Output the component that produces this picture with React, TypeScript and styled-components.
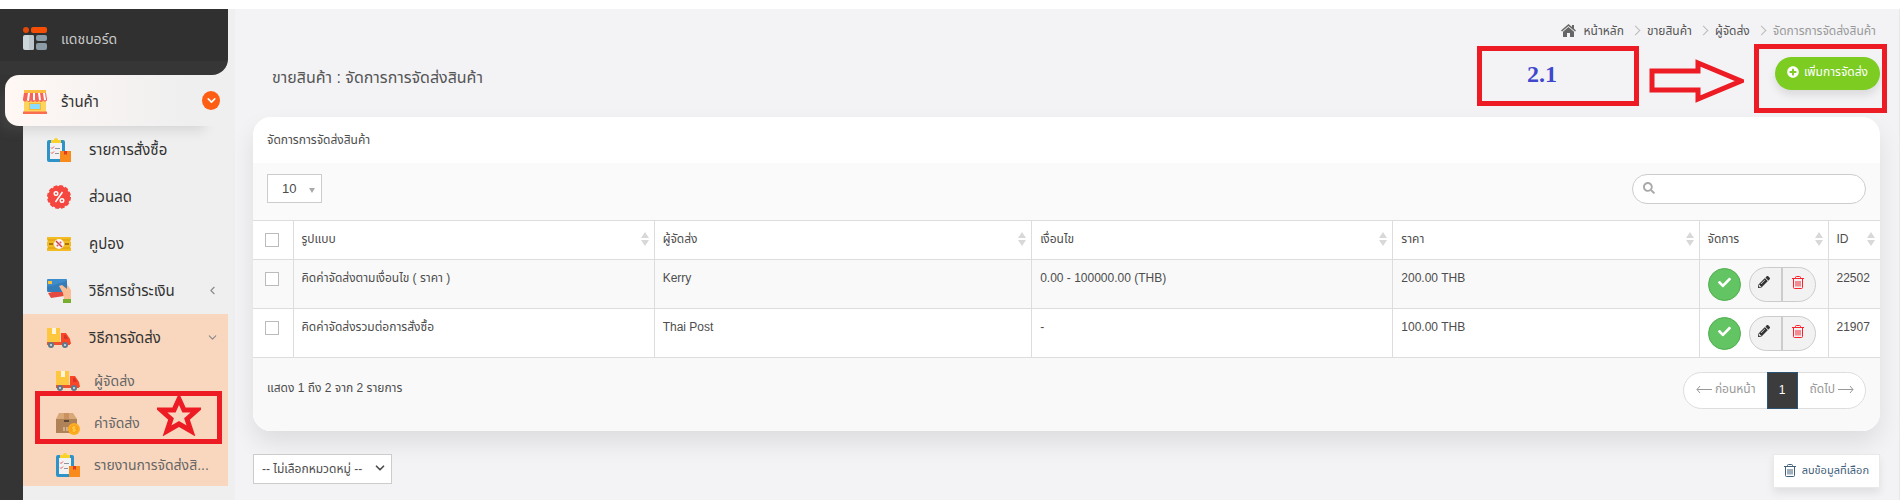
import React from "react";
import styled, { createGlobalStyle } from "styled-components";
import { FaCheck, FaPencilAlt, FaPlusCircle, FaSearch } from "react-icons/fa";
import { ChevronDown, ChevronLeft } from "lucide-react";

const Global = createGlobalStyle`
  *, *::before, *::after { box-sizing: border-box; }
  body { margin: 0; background: #fff; color: #4d4d4d; font: 12px/20px "Liberation Sans", "Noto Sans Thai", sans-serif; }
  a { color: inherit; text-decoration: none; }
  button, input, select { font: inherit; color: inherit; }
  svg { display: block; flex: none; }
  ul, ol, h1, h2 { margin: 0; padding: 0; list-style: none; font-weight: 400; }
`;

const Page = styled.div`display: flex; min-height: 100vh; padding-top: 9px;`;

/* sidebar */
const Sidebar = styled.aside`
  position: relative;
  flex: none;
  width: 235px;
  background: linear-gradient(90deg, #343434 23px, #efefef 23px);
`;
const DashboardLink = styled.a`
  display: flex; align-items: center; gap: 14px;
  height: 66px; margin-right: 7px; padding: 0 0 6px 23px;
  background: linear-gradient(#303030 52px, #363636 52px);
  border-bottom-right-radius: 16px;
  color: #c9c9c9; font-size: 14px;
`;
const ShopLink = styled.a`
  display: flex; align-items: center; gap: 14px;
  height: 51px; margin: 0 15px 0 5px; padding: 2px 0 0 18px;
  border-radius: 14px 0 0 14px;
  background: linear-gradient(90deg, #fff8f5, #efefef 85%);
  box-shadow: -10px 10px 12px -6px rgba(120, 120, 120, 0.22);
  color: #333; font-size: 15px;
`;
const ShopBadge = styled.span`
  display: grid; place-items: center; width: 18px; height: 19px; margin-left: auto; margin-top: -3px;
  border-radius: 50%; background: #fd5e13; color: #fff;
`;
const SubMenu = styled.ul`
  padding: 0 7px 0 23px;
  ul { margin-top: -1px; }
`;
const SubLink = styled.a`
  display: flex; align-items: center; gap: 18px; height: 47px; padding: 0 9px 0 24px;
  color: #333; font-size: 15px;
  > svg:last-child:not(:first-child) { margin-left: auto; color: #888; }
`;
const ActiveGroup = styled.li`background: #f9d7be; color: #222;`;
const LeafLink = styled.a`
  display: flex; align-items: center; gap: 14px; height: 42px; padding: 0 12px 0 33px;
  color: #666; font-size: 14px; white-space: nowrap;
`;

/* content */
const Main = styled.main`
  position: relative; flex: 1; min-width: 0; padding: 0 19px 0 18px;
  background: #f3f3f6; border-right: 1px solid #e9e9ec;
`;
const Crumbs = styled.ol`
  display: flex; justify-content: flex-end; align-items: center; gap: 8px; height: 43px; padding-right: 4px;
  color: #555;
  li { display: flex; align-items: center; gap: 8px; }
  li + li::before { content: ""; width: 7px; height: 7px; border: solid #bbb; border-width: 1px 1px 0 0; transform: rotate(45deg); }
  li:last-child { color: #999; }
`;
const TitleBar = styled.header`
  display: flex; justify-content: space-between; align-items: flex-start; height: 65px; padding-top: 5px;
  h1 { padding: 10px 0 0 19px; font-size: 16px; line-height: 22px; color: #555; }
`;
const AddButton = styled.button`
  display: flex; align-items: center; gap: 5px; height: 33px; padding: 0 12px 4px; border: 0; border-radius: 17px;
  background: #7ccc22; color: #fff; box-shadow: 0 5px 8px rgba(0, 0, 0, 0.1);
`;
const Card = styled.section`overflow: hidden; border-radius: 18px; background: #fff;`;
const CardShadow = styled.div`border-radius: 18px; box-shadow: 0 12px 24px rgba(0, 0, 0, 0.09);`;
const CardTitle = styled.h2`height: 46px; padding: 13px 14px; font-size: 12px; line-height: 20px;`;
const Toolbar = styled.div`
  display: flex; justify-content: space-between; height: 57px; padding: 11px 14px; background: #fafafa;
`;
const SelectWrap = styled.label<{ $small?: boolean }>`
  position: relative; display: block; height: ${(p) => (p.$small ? 29 : 30)}px;
  select {
    appearance: none; height: 100%; padding: ${(p) => (p.$small ? "0 24px 0 14px" : "0 28px 0 8px")};
    border: 1px solid #ccc; border-radius: 0; background: #fff; font-size: ${(p) => (p.$small ? 13 : 12)}px;
  }
  svg { position: absolute; right: ${(p) => (p.$small ? 7 : 5)}px; top: 7px; pointer-events: none; }
`;
const SearchBox = styled.label`
  display: flex; align-items: center; gap: 8px; width: 234px; height: 30px; padding: 0 12px 2px 10px;
  border: 1px solid #ccc; border-radius: 15px; background: #fff; color: #aaa;
  input { min-width: 0; flex: 1; border: 0; outline: 0; background: none; }
`;
const DataTable = styled.table`
  width: 100%; table-layout: fixed; border-collapse: collapse;
  th, td { border: 1px solid #ddd; text-align: left; vertical-align: top; font-weight: 400; padding: 8px; white-space: nowrap; }
  th { height: 39px; }
  td { height: 49px; }
  th:first-child, td:first-child { border-left: 0; padding: 12px 12px 0; }
  th:last-child, td:last-child { border-right: 0; }
  tbody tr:nth-child(odd) { background: #f9f9f9; }
`;
const HeadCell = styled.span`display: flex; align-items: center; justify-content: space-between; margin-right: -3px;`;
const Check = styled.input`
  appearance: none; display: block; width: 14px; height: 14px; margin: 0; border: 1px solid #bbb; background: #fff;
`;
const Actions = styled.div`display: flex; align-items: center; gap: 8px; height: 34px; margin: -1px 0 -4px;`;
const OkButton = styled.button`
  display: grid; place-items: center; width: 33px; height: 33px; padding: 0 0 4px; border: 1px solid #4fae4d; border-radius: 50%;
  background: #62c462; color: #fff;
`;
const Pair = styled.div`
  display: flex; width: 67px; height: 35px; border: 1px solid #ccc; border-radius: 18px; overflow: hidden; background: #f2f2f2;
`;
const PairButton = styled.button<{ $danger?: boolean }>`
  flex: 1; display: grid; place-items: center; padding: 0 2px 4px 0; border: 0; background: none;
  color: ${(p) => (p.$danger ? "#f8222f" : "#333")};
  & + & { border-left: 2px solid #ccc; }
`;
const CardFooter = styled.footer`
  display: flex; justify-content: space-between; height: 73px; padding: 14px 14px 0; background: #f9f9f9;
  p { margin: 6px 0 0; }
`;
const Pager = styled.nav`
  display: flex; height: 37px; border: 1px solid #ddd; border-radius: 19px; background: #fff;
`;
const PageButton = styled.button<{ $current?: boolean }>`
  display: flex; align-items: center; justify-content: center; gap: 3px; padding: 0 11px 4px 12px; border: 0; background: none; color: #999;
  ${(p) => p.$current && "width: 31px; margin: -1px 0; padding: 0 0 2px; border: 1px solid #2d5472; background: #3c3c3c; color: #fff;"}
`;
const BulkBar = styled.div`display: flex; justify-content: space-between; padding-top: 23px;`;
const DeleteButton = styled.button`
  display: flex; align-items: center; gap: 6px; height: 34px; padding: 0 10px 2px; border: 1px solid #e9e9e9;
  background: #fff; color: #41607a; font-size: 11px; box-shadow: 0 5px 8px rgba(0, 0, 0, 0.08);
`;

/* red guide marks drawn over the page */
const Mark = styled.div<{ $w: number; $h: number; $top: number; $left?: number; $right?: number }>`
  position: absolute; pointer-events: none; border: 5px solid #ed1c24;
  width: ${(p) => p.$w}px; height: ${(p) => p.$h}px; top: ${(p) => p.$top}px;
  ${(p) => (p.$left !== undefined ? `left: ${p.$left}px;` : `right: ${p.$right}px;`)}
`;
const StepNumber = styled.strong`
  display: block; padding: 9px 0 0 45px; color: #3f48cc; font: bold 24px/28px "Liberation Serif", serif;
`;
const ArrowMark = styled.svg`position: absolute; right: 155px; top: 50px;`;
const StarMark = styled.svg`position: absolute; left: 157px; top: 385px;`;

const Sorter = () => (
  <svg width="8" height="14" viewBox="0 0 8 14" fill="#d8d8d8"><path d="M4 0l4 6H0zM4 14l4-6H0z" /></svg>
);
const TrashIcon = () => (
  <svg width="12" height="13" viewBox="0 0 12 13" fill="none" stroke="currentColor">
    <path d="M0 2.500h12M3.500 2.500v-1a1 1 0 011-1h3a1 1 0 011 1v1M1.500 3v8.500a1 1 0 001 1h7a1 1 0 001-1V3M4 5v5.500M6 5v5.500M8 5v5.500" />
  </svg>
);
const HomeIcon = () => (
  <svg width="15" height="13" viewBox="0 0 15 13" fill="#666">
    <path d="M7.500 0L11 3V1h2v3.700l2 1.800-1 1L7.500 2 1 7.500l-1-1z" /><path d="M7.500 3L13 7.800V13H9V9H6v4H2V7.800z" />
  </svg>
);
const LongArrow = ({ back }: { back?: boolean }) => (
  <svg width="16" height="8" viewBox="0 0 16 8" fill="none" stroke="currentColor">
    <path d={back ? "M16 4.500H1M4 1L1 4.500 4 8" : "M0 4.500h15M12 1l3 3.500L12 8"} />
  </svg>
);
const DashboardIcon = () => (
  <svg width="24" height="24" viewBox="0 0 24 24">
    <circle cx="3" cy="3" r="3" fill="#e04a08" /><rect x="8" width="16" height="6" rx="2" fill="#f64f05" />
    <rect y="8" width="11" height="15" rx="2" fill="#cdd6da" /><path d="M6 8h3a2 2 0 012 2v11a2 2 0 01-2 2H6z" fill="#bcc6cc" />
    <rect x="13" y="8" width="11" height="6" rx="2" fill="#8b9ca6" /><rect x="13" y="16" width="11" height="7" rx="2" fill="#8b9ca6" />
  </svg>
);
const ShopIcon = () => (
  <svg width="24" height="24" viewBox="0 0 24 24">
    <path d="M1 8h22v14H1z" fill="#ffd45c" /><path d="M0 21.500h24V24H0z" fill="#fb6d4f" />
    <path d="M1 0h22v3H1z" fill="#fdbd40" /><rect x="6.500" y="13.500" width="11" height="6" fill="#8cdcff" stroke="#f5b93a" />
    <path d="M1 3h22l1 6a2 2 0 01-4 1 2 2 0 01-4 0 2 2 0 01-4 0 2 2 0 01-4 0 2 2 0 01-4 0 2 2 0 01-4-1z" fill="#f5635a" />
    <path d="M5 3h2L6 11a2 2 0 01-2-1zM10 3h2v7a2 2 0 01-2 0zM15 3h2l1 7a2 2 0 01-2 0zM20 3h2l1 7a2 2 0 01-2 0z" fill="#fff" />
  </svg>
);
const OrderIcon = () => (
  <svg width="24" height="24" viewBox="0 0 24 24">
    <rect y="2" width="18" height="22" rx="2" fill="#2d93c9" /><path d="M3 5h12v16H3z" fill="#f3f1f2" />
    <path d="M4 5V2h3a2 2 0 014 0h3v3z" fill="#fbd22c" />
    <path d="M4 9.500l1 1 2-2M4 14.500l1 1 2-2" fill="none" stroke="#ee5047" /><path d="M8 10.500h5M8 15.500h4" stroke="#8f95a0" />
    <path d="M13 13h11v11H13z" fill="#f98a1c" /><path d="M17 13h3v4l-1.500-1-1.500 1z" fill="#e03c20" />
  </svg>
);
const DiscountIcon = () => (
  <svg width="24" height="24" viewBox="0 0 24 24">
    <circle cx="12" cy="12" r="11" fill="#f5473f" /><circle cx="12" cy="12" r="11" fill="none" stroke="#f5473f" strokeWidth="2" strokeDasharray="3.760 2" />
    <path d="M15.500 7l-7 10" stroke="#fff" strokeWidth="1.500" /><circle cx="9" cy="8.500" r="1.800" fill="none" stroke="#fff" strokeWidth="1.400" /><circle cx="15" cy="15.500" r="1.800" fill="none" stroke="#fff" strokeWidth="1.400" />
  </svg>
);
const CouponIcon = () => (
  <svg width="24" height="24" viewBox="0 0 24 24">
    <path d="M0 5h24v3l-1 1 1 1v4l-1 1 1 1v3H0v-3l1-1-1-1v-4l1-1-1-1z" fill="#f3bb22" /><path d="M1 8h22M1 16h22" stroke="#d99b0c" />
    <path d="M2 11h4v2H2zM18 11h4v2h-4z" fill="#a8741a" /><circle cx="12" cy="12" r="5" fill="#fff4ef" />
    <path d="M9 9l6 6" stroke="#cb3a45" strokeWidth="1.500" /><circle cx="13.500" cy="10.500" r="1" fill="#d65a60" /><circle cx="10.500" cy="13.500" r="1" fill="#d65a60" />
  </svg>
);
const PaymentIcon = () => (
  <svg width="24" height="24" viewBox="0 0 24 24">
    <path d="M1 14l13-3 4 3-1 3-13 2z" fill="#e34b40" /><rect width="20" height="13" rx="1" fill="#3d8ccb" /><path d="M0 8L20 2v10l-1 1H1z" fill="#357db9" />
    <rect x="1" y="2" width="4" height="3" fill="#f8c23c" /><path d="M12 7l3-1 5 4V5l4 6v9h-7l-1-6z" fill="#fbbd93" /><path d="M16 20h8v4h-8z" fill="#78ae2e" />
  </svg>
);
const TruckIcon = () => (
  <svg width="24" height="24" viewBox="0 0 24 24">
    <path d="M0 2h13v14H0z" fill="#ffc640" /><path d="M5 2h4v6H5z" fill="#fff5dd" /><path d="M0 16h23v3H0z" fill="#ef5030" />
    <path d="M14 7h5l4 6 1 5H14z" fill="#fb4527" /><path d="M17 9h2l2 4h-4z" fill="#d83427" />
    <circle cx="4" cy="19" r="3" fill="#60788b" /><circle cx="4" cy="19" r="1" fill="#dce7ed" /><circle cx="18" cy="19" r="3" fill="#60788b" /><circle cx="18" cy="19" r="1" fill="#dce7ed" />
  </svg>
);
const BoxIcon = () => (
  <svg width="24" height="24" viewBox="0 0 24 24">
    <path d="M3 2h14l4 6H0z" fill="#d9a878" /><path d="M0 8h21v14H0z" fill="#b08258" /><path d="M8 2h5v6H8z" fill="#c99260" />
    <path d="M8 9h5v2H8z" fill="#5d4734" /><path d="M8 16v4M11 16v4" stroke="#f1dcc2" />
    <circle cx="18" cy="18" r="6" fill="#fbad24" /><circle cx="18" cy="18" r="4" fill="#fda11b" /><path d="M19.500 16h-2a1 1 0 000 2h1a1 1 0 010 2h-2M18 15v6" stroke="#fbd448" fill="none" />
  </svg>
);

const menu = [
  { label: "รายการสั่งซื้อ", Icon: OrderIcon },
  { label: "ส่วนลด", Icon: DiscountIcon },
  { label: "คูปอง", Icon: CouponIcon },
  { label: "วิธีการชำระเงิน", Icon: PaymentIcon, more: true },
];
const shipping = [
  { label: "ผู้จัดส่ง", Icon: TruckIcon },
  { label: "ค่าจัดส่ง", Icon: BoxIcon },
  { label: "รายงานการจัดส่งสิ...", Icon: OrderIcon },
];
const rows = [
  { id: "22502", name: "คิดค่าจัดส่งตามเงื่อนไข ( ราคา )", carrier: "Kerry", rule: "0.00 - 100000.00 (THB)", price: "200.00 THB" },
  { id: "21907", name: "คิดค่าจัดส่งรวมต่อการสั่งซื้อ", carrier: "Thai Post", rule: "-", price: "100.00 THB" },
];
const heads = ["รูปแบบ", "ผู้จัดส่ง", "เงื่อนไข", "ราคา", "จัดการ", "ID"];

export default function App() {
  return (
    <>
      <Global />
      <Page>
        <Sidebar>
          <DashboardLink href="#"><DashboardIcon />แดชบอร์ด</DashboardLink>
          <ShopLink href="#"><ShopIcon />ร้านค้า<ShopBadge><ChevronDown size={13} strokeWidth={3} /></ShopBadge></ShopLink>
          <SubMenu>
            {menu.map(({ label, Icon, more }) => (
              <li key={label}><SubLink href="#"><Icon />{label}{more && <ChevronLeft size={13} />}</SubLink></li>
            ))}
            <ActiveGroup>
              <SubLink href="#"><TruckIcon />วิธีการจัดส่ง<ChevronDown size={13} /></SubLink>
              <ul>
                {shipping.map(({ label, Icon }) => (
                  <li key={label}><LeafLink href="#"><Icon />{label}</LeafLink></li>
                ))}
              </ul>
            </ActiveGroup>
          </SubMenu>
          <Mark $w={187} $h={53} $left={35} $top={382} />
          <StarMark width="44" height="42" viewBox="0 0 44 42" fill="none" stroke="#ed1c24" strokeWidth="5">
            <path d="M22 5l5 11h13l-10 9 4 12-12-7-12 7 4-12-10-9h13z" />
          </StarMark>
        </Sidebar>
        <Main>
          <Crumbs>
            <li><HomeIcon /><a href="#">หน้าหลัก</a></li>
            <li><a href="#">ขายสินค้า</a></li>
            <li><a href="#">ผู้จัดส่ง</a></li>
            <li>จัดการการจัดส่งสินค้า</li>
          </Crumbs>
          <TitleBar>
            <h1>ขายสินค้า : จัดการการจัดส่งสินค้า</h1>
            <AddButton><FaPlusCircle size={12} />เพิ่มการจัดส่ง</AddButton>
          </TitleBar>
          <CardShadow>
            <Card>
              <CardTitle>จัดการการจัดส่งสินค้า</CardTitle>
              <Toolbar>
                <SelectWrap $small>
                  <select aria-label="จำนวนรายการ"><option>10</option></select>
                  <svg width="6" height="15" viewBox="0 0 6 15" fill="#aaa"><path d="M0 7h6l-3 5z" /></svg>
                </SelectWrap>
                <SearchBox><FaSearch size={12} /><input type="search" aria-label="ค้นหา" /></SearchBox>
              </Toolbar>
              <DataTable>
                <colgroup>
                  <col style={{ width: 40 }} /><col style={{ width: "22.2%" }} /><col style={{ width: "23.2%" }} />
                  <col style={{ width: "22.2%" }} /><col /><col style={{ width: 129 }} /><col style={{ width: 52 }} />
                </colgroup>
                <thead>
                  <tr>
                    <th><Check type="checkbox" aria-label="เลือกทั้งหมด" /></th>
                    {heads.map((h) => <th key={h}><HeadCell>{h}<Sorter /></HeadCell></th>)}
                  </tr>
                </thead>
                <tbody>
                  {rows.map((r) => (
                    <tr key={r.id}>
                      <td><Check type="checkbox" aria-label={r.name} /></td>
                      <td>{r.name}</td><td>{r.carrier}</td><td>{r.rule}</td><td>{r.price}</td>
                      <td>
                        <Actions>
                          <OkButton aria-label="เปิดใช้งาน"><FaCheck size={13} /></OkButton>
                          <Pair>
                            <PairButton aria-label="แก้ไข"><FaPencilAlt size={12} /></PairButton>
                            <PairButton $danger aria-label="ลบ"><TrashIcon /></PairButton>
                          </Pair>
                        </Actions>
                      </td>
                      <td>{r.id}</td>
                    </tr>
                  ))}
                </tbody>
              </DataTable>
              <CardFooter>
                <p>แสดง 1 ถึง 2 จาก 2 รายการ</p>
                <Pager>
                  <PageButton><LongArrow back />ก่อนหน้า</PageButton>
                  <PageButton $current>1</PageButton>
                  <PageButton>ถัดไป<LongArrow /></PageButton>
                </Pager>
              </CardFooter>
            </Card>
          </CardShadow>
          <BulkBar>
            <SelectWrap>
              <select aria-label="หมวดหมู่"><option>-- ไม่เลือกหมวดหมู่ --</option></select>
              <ChevronDown size={14} strokeWidth={3} />
            </SelectWrap>
            <DeleteButton><TrashIcon />ลบข้อมูลที่เลือก</DeleteButton>
          </BulkBar>
          <Mark $w={162} $h={60} $right={260} $top={37}><StepNumber>2.1</StepNumber></Mark>
          <ArrowMark width="96" height="44" viewBox="0 0 96 44" fill="none" stroke="#ed1c24" strokeWidth="5">
            <path d="M4 12h46V4l43 18-43 18v-9H4z" />
          </ArrowMark>
          <Mark $w={133} $h={69} $right={12} $top={35} />
        </Main>
      </Page>
    </>
  );
}
